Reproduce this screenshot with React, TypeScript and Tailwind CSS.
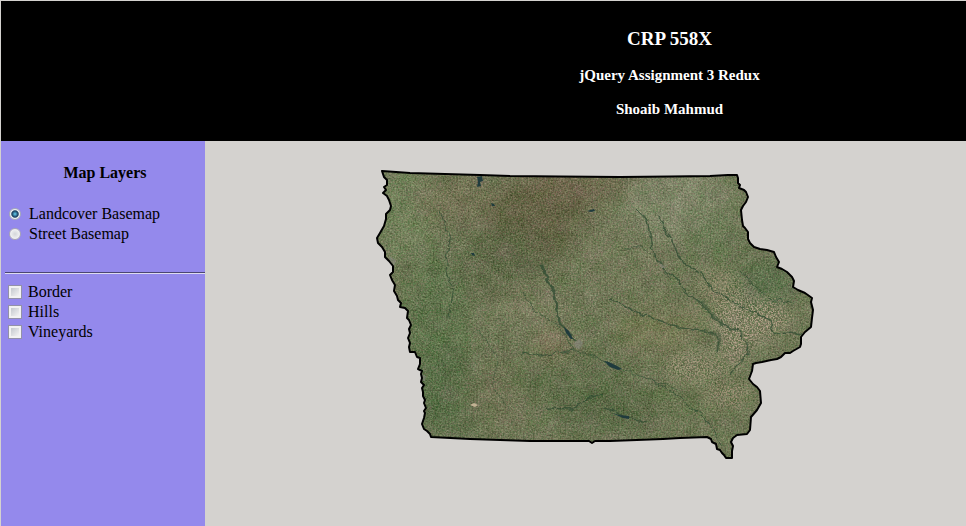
import React from "react";

const OUTLINE =
  "M12 11 L40 13 75 14 110 15 140 16 190 16.5 250 17 300 16.5 340 16 358 15 367 15 368 18 368 23 370 25 369 28 374 30 376 32 378 37 376 42 373 46 371 50 372 60 373 66 375 68 378 72 378 79 380 83 384 87 390 89 397 90 404 92 406 97 409 102 407 107 412 109 417 112 422 117 424 121 423 127 428 130 435 133 442 138 441 142 443 150 442 158 441 167 435 172 431 177 431 184 430 187 423 191 420 193 415 193 411 197 407 199 401 200 392 202 386 203 383 204 382 211 379 219 383 224 387 227 390 231 391 243 387 250 381 257 380 270 377 274 367 275 363 278 361 282 363 286 362 291 362 298 356 298 354 295 352 293 350 290 347 289 346 284 342 282 341 279 337 277 310 278 293 279 267 280 240 281 225 281 222 283 219 281 160 281 130 280 100 279 61 277 60 274 57 271 54 269 52 264 54 258 55 253 54 251 56 248 54 243 55 240 53 236 53 232 52 228 54 225 51 222 52 218 51 214 52 211 48 209 50 204 50 198 47 197 45 192 40 192 39 187 40 183 38 178 40 173 39 169 41 165 39 160 37 158 38 151 35 148 30 147 31 143 28 140 27 136 24 131 25 125 22 120 20 115 23 112 23 106 19 101 15 97 15 92 12 87 8 83 7 78 10 73 14 66 16 59 16 54 20 50 21 46 19 40 17 36 13 33 16 30 14 27 17 25 17 20 14 17 Z";

type Patch = [cx: number, cy: number, rx: number, ry: number, fill: string, opacity: number];

const PATCHES: Patch[] = [
  [35, 50, 30, 55, "#6d7c55", 0.8],
  [90, 40, 45, 25, "#6f6b4f", 0.7],
  [170, 60, 55, 42, "#5c5b3d", 0.9],
  [135, 105, 45, 35, "#5a6142", 0.8],
  [200, 25, 60, 16, "#6e6049", 0.7],
  [65, 175, 32, 80, "#586d45", 0.8],
  [80, 235, 38, 45, "#536741", 0.8],
  [125, 235, 35, 32, "#6e6d50", 0.6],
  [160, 145, 35, 22, "#77785a", 0.8],
  [250, 95, 55, 45, "#6e7354", 0.8],
  [310, 45, 55, 38, "#7a8063", 0.9],
  [200, 220, 60, 28, "#5b6845", 0.8],
  [240, 250, 55, 24, "#53613e", 0.7],
  [285, 170, 40, 22, "#71724e", 0.8],
  [345, 75, 28, 24, "#5f714c", 0.7],
  [395, 125, 32, 24, "#546845", 0.8],
  [330, 235, 40, 30, "#606c48", 0.6],
  [182, 185, 18, 12, "#8a755b", 0.7],
];

const PALE: Patch[] = [
  [375, 160, 32, 27, "#c0aa96", 0.8],
  [350, 126, 24, 18, "#b0a182", 0.7],
  [365, 190, 15, 18, "#bfa791", 0.7],
  [324, 207, 32, 17, "#bca58e", 0.7],
  [358, 235, 24, 15, "#b89f89", 0.7],
  [405, 158, 18, 20, "#bfa890", 0.7],
  [328, 158, 20, 13, "#a89777", 0.5],
];

const RIVERS: [d: string, width: number][] = [
  ["M171 104 L178 119 184 132 187 147 190 163 196 170 205 180", 2.4],
  ["M153 132 L164 151 186 163 204 190 220 195 235 202 254 211 280 219 307 229", 0.8],
  ["M266 49 L278 60 281 75 284 96 295 109 307 118 315 133 331 142 339 155 349 163 367 170 377 183 378 194 366 205 361 216", 1.4],
  ["M287 55 L301 78 308 95 318 107 333 115 342 128 360 140 380 151 398 159 405 173 420 172 432 174", 1.4],
  ["M240 139 L273 155 310 168 341 172 349 180 347 193", 1.4],
  ["M70 50 L80 78 76 110 83 132 79 158", 1],
  ["M152 192 L170 196 188 193 204 190", 1.1],
  ["M176 248 L201 249 218 239 233 235", 1.3],
  ["M235 247 L257 257 277 262", 1.2],
  ["M110 170 L128 200 122 225 140 250", 0.6],
  ["M255 90 L268 85 290 101 300 120", 0.7],
  ["M370 110 L384 126 398 138 424 144", 0.9],
  ["M280 219 L310 238 337 260 352 287", 1],
];

function IowaMap() {
  return (
    <svg viewBox="0 0 450 310" role="img" aria-label="Landcover map of Iowa" className="block w-full max-w-[450px]">
      <defs>
        <clipPath id="state">
          <path d={OUTLINE} />
        </clipPath>
        <filter id="soft" x="-40%" y="-40%" width="180%" height="180%" colorInterpolationFilters="sRGB">
          <feGaussianBlur stdDeviation="11" />
        </filter>
        <filter id="terrain" filterUnits="userSpaceOnUse" x="0" y="0" width="450" height="310" colorInterpolationFilters="sRGB">
          <feTurbulence type="fractalNoise" baseFrequency="0.07" numOctaves="3" seed="8" />
          <feColorMatrix values="1 0 0 0 0  0.6 0.4 0 0 0  0.9 0 0.1 0 0  0 0 0 0 1" result="mottle" />
          <feTurbulence type="fractalNoise" baseFrequency="0.6" numOctaves="2" seed="3" />
          <feColorMatrix values="0.8 0.2 0 0 0  0.5 0.5 0 0 0  0.6 0.3 0.1 0 0  0 0 0 0 1" result="grain" />
          <feComposite in="SourceGraphic" in2="mottle" operator="arithmetic" k1="0" k2="1" k3="0.13" k4="-0.055" result="base" />
          <feComposite in="base" in2="grain" operator="arithmetic" k1="0" k2="1" k3="0.46" k4="-0.215" />
        </filter>
        <filter id="speckle" filterUnits="userSpaceOnUse" x="260" y="80" width="190" height="200" colorInterpolationFilters="sRGB">
          <feGaussianBlur in="SourceGraphic" stdDeviation="7" result="spread" />
          <feTurbulence type="fractalNoise" baseFrequency="0.62" numOctaves="2" seed="12" />
          <feColorMatrix values="0 0 0 0 1  0 0 0 0 1  0 0 0 0 1  4 0 0 0 -1.75" result="dots" />
          <feComposite in="spread" in2="dots" operator="in" />
        </filter>
        <filter id="rough" filterUnits="userSpaceOnUse" x="0" y="0" width="450" height="310" colorInterpolationFilters="sRGB">
          <feTurbulence type="fractalNoise" baseFrequency="0.12" numOctaves="2" seed="5" />
          <feDisplacementMap in="SourceGraphic" scale="7" xChannelSelector="R" yChannelSelector="G" />
        </filter>
      </defs>
      <g clipPath="url(#state)">
        <g filter="url(#terrain)">
          <rect width="450" height="310" fill="#68704f" />
          <g filter="url(#soft)">
            {PATCHES.map(([cx, cy, rx, ry, fill, opacity], i) => (
              <ellipse key={i} cx={cx} cy={cy} rx={rx} ry={ry} fill={fill} opacity={opacity} />
            ))}
          </g>
        </g>
        <g filter="url(#speckle)">
          {PALE.map(([cx, cy, rx, ry, fill, opacity], i) => (
            <ellipse key={i} cx={cx} cy={cy} rx={rx} ry={ry} fill={fill} opacity={opacity} />
          ))}
        </g>
        <g fill="none" stroke="#2f4b32" strokeLinejoin="round" opacity="0.75" filter="url(#rough)">
          {RIVERS.map(([d, width]) => (
            <path key={d} d={d} strokeWidth={width} />
          ))}
          <path d="M331 140 L339 153 352 164 M338 172 L350 176 348 190" strokeWidth="4" opacity="0.5" />
        </g>
        <g fill="#203b3d">
          <path d="M107 17 l5 -1 1 5 -3 1 1 4 -4 1 1 -5Z" />
          <path d="M121 43 l3 1 1 2 -3 0Z M101 93 l3 0 1 3 -3 -1Z M217 51 l7 -2 1 2 -4 1Z" />
          <path d="M234 201 l5 1 8 4 5 3 -4 1 -8 -3Z" />
          <path d="M242 253 l7 2 10 1 0 3 -6 -1Z" />
          <path d="M194 167 l5 4 4 8 -2 0 -5 -6Z" />
        </g>
        <path d="M100 245 l4 -2 4 2 -3 2Z" fill="#c2b294" />
        <path
          d="M204 183 l5 -4 4 4 -3 6 -4 -1Z M288 103 l5 2 3 3 -4 0Z M19 96 l7 4 -2 7 -4 -3Z M52 214 l4 2 -1 5 -3 0Z"
          fill="#85857c"
          opacity="0.6"
        />
      </g>
      <path d={OUTLINE} fill="none" stroke="#000" strokeWidth="2" strokeLinejoin="round" />
    </svg>
  );
}

function Radio({ id, label, defaultChecked }: { id: string; label: string; defaultChecked?: boolean }) {
  return (
    <div className="flex h-5 items-center gap-2">
      <input
        id={id}
        type="radio"
        name="basemap"
        defaultChecked={defaultChecked}
        className="h-3 w-3 shrink-0 appearance-none rounded-full border border-[#a5a2b5] bg-[#eceff1] bg-radial from-[#d4d6d9] to-white checked:border-[#a3a8b8] checked:from-[#5fc3e4] checked:from-5% checked:via-[#173c5b] checked:via-45% checked:to-[#edf2f4] checked:to-60%"
      />
      <label htmlFor={id}>{label}</label>
    </div>
  );
}

function Check({ id, label }: { id: string; label: string }) {
  return (
    <div className="flex h-5 items-center gap-[7px]">
      <input
        id={id}
        type="checkbox"
        className="h-3 w-3 shrink-0 appearance-none border-2 border-[#f2f2f2] bg-linear-to-br from-[#c4c8ce] to-[#f4f4f4] outline outline-[#9391a8] checked:from-[#173c5b]"
      />
      <label htmlFor={id}>{label}</label>
    </div>
  );
}

export default function App() {
  return (
    <div className="flex min-h-screen flex-col border-t border-l border-[#d4d2cf] bg-[#d4d2cf] font-['Liberation_Serif',serif] text-base leading-5 text-black">
      <header className="flex h-[140px] flex-col items-center bg-black pt-7 pl-[372px] text-center font-bold text-white">
        <h1 className="text-[19px]">CRP 558X</h1>
        <h2 className="mt-4 text-[15px]">jQuery Assignment 3 Redux</h2>
        <h2 className="mt-[14px] text-[15px]">Shoaib Mahmud</h2>
      </header>
      <div className="flex grow">
        <aside className="w-[204px] shrink-0 bg-[#9489ec] pt-[22px] pl-1">
          <h3 className="text-center font-bold">Map Layers</h3>
          <form>
            <div className="mt-[21px] pl-1">
              <Radio id="landcover" label="Landcover Basemap" defaultChecked />
              <Radio id="street" label="Street Basemap" />
            </div>
            <hr className="mt-7 border-t border-b border-t-[#4b4672] border-b-[#dedcf0]" />
            <div className="mt-2 pl-1">
              <Check id="border" label="Border" />
              <Check id="hills" label="Hills" />
              <Check id="vineyards" label="Vineyards" />
            </div>
          </form>
        </aside>
        <main className="grow pt-[19px] pl-[165px]">
          <IowaMap />
        </main>
      </div>
    </div>
  );
}
